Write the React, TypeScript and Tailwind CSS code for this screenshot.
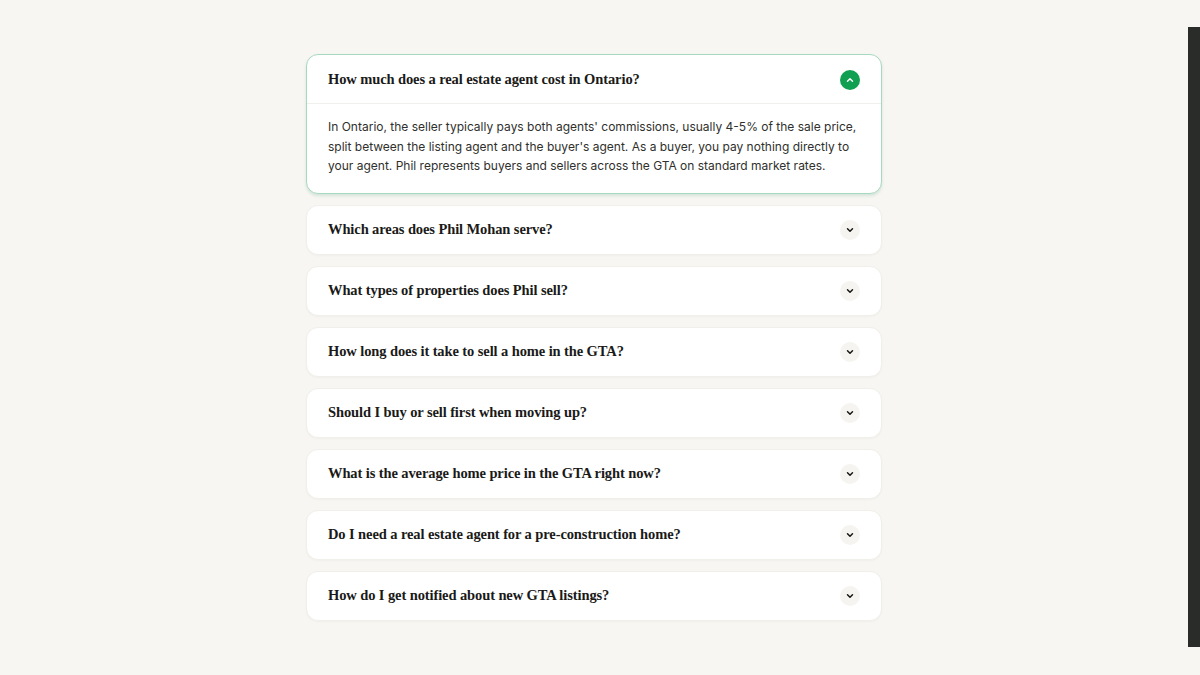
import { ChevronDown, ChevronUp } from 'lucide-react';

const faqs = [
  {
    q: 'How much does a real estate agent cost in Ontario?',
    a: "In Ontario, the seller typically pays both agents' commissions, usually 4-5% of the sale price, split between the listing agent and the buyer's agent. As a buyer, you pay nothing directly to your agent. Phil represents buyers and sellers across the GTA on standard market rates.",
  },
  { q: 'Which areas does Phil Mohan serve?' },
  { q: 'What types of properties does Phil sell?' },
  { q: 'How long does it take to sell a home in the GTA?' },
  { q: 'Should I buy or sell first when moving up?' },
  { q: 'What is the average home price in the GTA right now?' },
  { q: 'Do I need a real estate agent for a pre-construction home?' },
  { q: 'How do I get notified about new GTA listings?' },
];

export default function App() {
  return (
    <div className="flex min-h-[675px] bg-[#f7f6f2] font-['Inter',sans-serif]">
      <div className="flex-1 pt-[54px]">
        <div className="mx-auto flex w-[576px] flex-col gap-[11px]">
          {faqs.map((f, i) => {
            const open = i === 0;
            return (
              <div
                key={f.q}
                className={
                  open
                    ? 'rounded-[12px] border border-[#a9d8c0] bg-white shadow-[0_2px_3px_rgba(60,150,110,0.18)]'
                    : 'rounded-[12px] border border-[#f0efea] bg-white shadow-[0_1px_2px_rgba(0,0,0,0.03)]'
                }
              >
                <div className="flex h-[48px] items-center justify-between px-[21px] pt-[1px]">
                  <span className="font-['Liberation_Serif',serif] text-[14.5px] font-bold tracking-[-0.1px] text-[#1a1a18]">
                    {f.q}
                  </span>
                  {open ? (
                    <span className="flex h-[20px] w-[20px] items-center justify-center rounded-full bg-[#11a052] text-white">
                      <ChevronUp size={10} strokeWidth={3.5} />
                    </span>
                  ) : (
                    <span className="flex h-[20px] w-[20px] items-center justify-center rounded-full bg-[#f5f4f0] text-[#151514]">
                      <ChevronDown size={10} strokeWidth={3.5} />
                    </span>
                  )}
                </div>
                {open && f.a && (
                  <div className="border-t border-[#f0efeb] px-[21px] pt-[13px] pb-[17px] text-[12px] leading-[19.5px] text-[#30302d]">
                    {f.a}
                  </div>
                )}
              </div>
            );
          })}
        </div>
      </div>
      <div className="mt-[27px] h-[620px] w-[12px] bg-[#2a2c29]" />
    </div>
  );
}
